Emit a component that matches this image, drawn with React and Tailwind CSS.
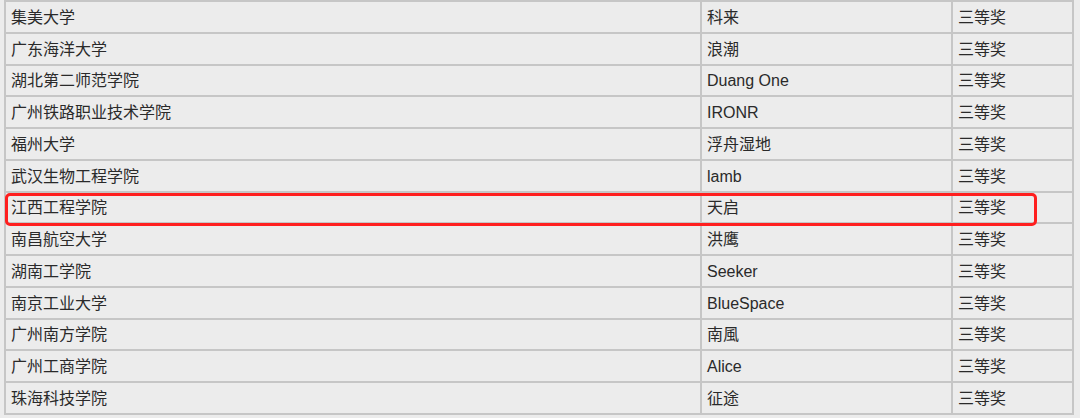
import React from "react";

const rows = [
  ["集美大学", "科来"],
  ["广东海洋大学", "浪潮"],
  ["湖北第二师范学院", "Duang One"],
  ["广州铁路职业技术学院", "IRONR"],
  ["福州大学", "浮舟湿地"],
  ["武汉生物工程学院", "lamb"],
  ["江西工程学院", "天启"],
  ["南昌航空大学", "洪鹰"],
  ["湖南工学院", "Seeker"],
  ["南京工业大学", "BlueSpace"],
  ["广州南方学院", "南風"],
  ["广州工商学院", "Alice"],
  ["珠海科技学院", "征途"],
];

export default function App() {
  return (
    <div
      className="relative w-[1080px] h-[418px] overflow-hidden bg-[#ececec] text-[#2a2a2a] text-[16px]"
      style={{ fontFamily: '"Liberation Sans", "Noto Sans CJK SC", sans-serif' }}
    >
      <div className="ml-[4px] w-[1070px] border-t-2 border-l-2 border-[#c6c6c6]">
        {rows.map(([school, team], i) => (
          <div key={i} className="flex h-[31.75px] border-b-2 border-[#c6c6c6]">
            <div className="w-[696px] border-r-2 border-[#c6c6c6] pl-[5px] flex items-center pt-[2px]">
              {school}
            </div>
            <div className="w-[251px] border-r-2 border-[#c6c6c6] pl-[5px] flex items-center pt-[2px]">
              {team}
            </div>
            <div className="w-[121px] border-r-2 border-[#c6c6c6] pl-[5px] flex items-center pt-[2px]">
              三等奖
            </div>
          </div>
        ))}
      </div>
      <div className="absolute left-[5px] top-[193px] w-[1032px] h-[33px] border-[3px] border-[#ff1f1f] rounded-[5px]" />
    </div>
  );
}
